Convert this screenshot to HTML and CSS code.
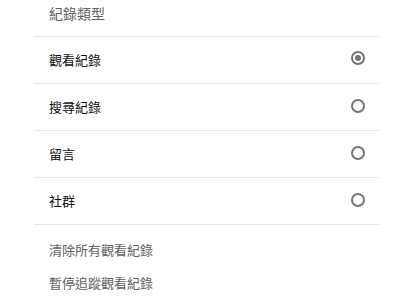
FILE: index.html
```html
<!DOCTYPE html>
<html lang="zh-Hant">
  <head>
    <meta charset="UTF-8" />
    <meta name="viewport" content="width=device-width, initial-scale=1.0" />
    <title>紀錄類型</title>
    <link rel="stylesheet" href="styles.css">
  </head>
  <body>
    <div class="panel">
      <div class="panel-title">紀錄類型</div>

      <ul class="type-list">
        <li class="type-item">
          <span class="type-label">觀看紀錄</span>
          <span class="radio checked"></span>
        </li>
        <li class="type-item">
          <span class="type-label">搜尋紀錄</span>
          <span class="radio"></span>
        </li>
        <li class="type-item">
          <span class="type-label">留言</span>
          <span class="radio"></span>
        </li>
        <li class="type-item">
          <span class="type-label">社群</span>
          <span class="radio"></span>
        </li>
      </ul>

      <div class="actions">
        <a class="action-link" href="#">清除所有觀看紀錄</a>
        <a class="action-link" href="#">暫停追蹤觀看紀錄</a>
      </div>
    </div>
  </body>
</html>
```

FILE: styles.css
```css
body {
  margin: 0;
  background-color: #ffffff;
  font-family: "Noto Sans CJK TC", "Noto Sans", sans-serif;
  font-size: 13px;
}

.panel {
  margin-left: 34px;
  width: 347px;
}

.panel-title {
  box-sizing: border-box;
  height: 37px;
  padding: 3px 0 0 15px;
  line-height: 20px;
  color: #606060;
  font-size: 14px;
  border-bottom: 1px solid #e8e8e8;
}

.type-list {
  list-style: none;
  margin: 0;
  padding: 0;
}

.type-item {
  display: flex;
  align-items: center;
  justify-content: space-between;
  height: 46px;
  padding: 0 16px 0 15px;
  border-bottom: 1px solid #e8e8e8;
  color: #0f0f0f;
}

.type-item:nth-child(1) .radio {
  margin-top: -4px;
}

.type-item:nth-child(2) .radio,
.type-item:nth-child(3) .radio,
.type-item:nth-child(4) .radio {
  margin-top: -2px;
}

.type-label {
  line-height: 20px;
}

.radio {
  position: relative;
  box-sizing: border-box;
  width: 14px;
  height: 14px;
  border: 2px solid #757575;
  border-radius: 50%;
}

.radio.checked::after {
  content: "";
  position: absolute;
  top: 2px;
  left: 2px;
  width: 6px;
  height: 6px;
  border-radius: 50%;
  background-color: #757575;
}

.actions {
  display: flex;
  flex-direction: column;
  padding-top: 8px;
}

.action-link {
  line-height: 33px;
  padding-left: 15px;
  color: #606060;
  text-decoration: none;
}
```
